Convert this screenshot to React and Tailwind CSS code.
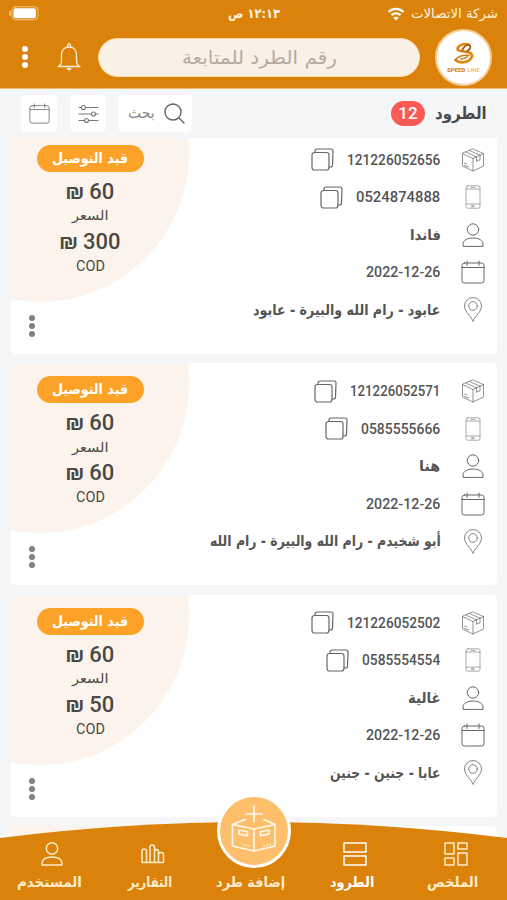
import React, { useLayoutEffect, useRef, useState } from 'react';

const PARCELS = [
    { id: '121226052656', idWidth: 93, phone: '0524874888', phoneWidth: 84, name: 'فاندا', nameWidth: 31, address: 'عابود - رام الله والبيرة - عابود', addressWidth: 187, price: '60', cod: '300' },
    { id: '121226052571', idWidth: 90, phone: '0585555666', phoneWidth: 79, name: 'هنا', nameWidth: 21, address: 'أبو شخيدم - رام الله والبيرة - رام الله', addressWidth: 231, price: '60', cod: '60' },
    { id: '121226052502', idWidth: 93, phone: '0585554554', phoneWidth: 78, name: 'غالية', nameWidth: 33, address: 'عابا - جنين - جنين', addressWidth: 111, price: '60', cod: '50' },
];

// Squeezes or stretches a label to a fixed width
const FitText = ({ width, className = '', dir = 'rtl', children }) => {
    const ref = useRef(null);
    const [scale, setScale] = useState(1);

    useLayoutEffect(() => {
        if (ref.current.offsetWidth) setScale(width / ref.current.offsetWidth);
    }, [width, children]);

    return (
        <span className="flex shrink-0 justify-start" dir="rtl" style={{ width }}>
            <span
                ref={ref}
                dir={dir}
                className={`block shrink-0 origin-right whitespace-nowrap ${className}`}
                style={{ transform: `scaleX(${scale})` }}
            >
                {children}
            </span>
        </span>
    );
};

const Svg = ({ children, className = '', ...props }) => (
    <svg fill="none" stroke="currentColor" strokeLinecap="round" strokeLinejoin="round" className={`shrink-0 ${className}`} {...props}>
        {children}
    </svg>
);

const UserIcon = ({ className, strokeWidth = 1 }) => (
    <Svg width="22" height="24" viewBox="0 0 22 24" strokeWidth={strokeWidth} className={className}>
        <circle cx="11" cy="6.5" r="5.7" />
        <path d="M1 23v-2c0-3.500 4-6 10-6s10 2.500 10 6v2z" />
    </Svg>
);

const CalendarIcon = ({ className }) => (
    <Svg width="24" height="24" viewBox="0 0 24 24" strokeWidth="1" className={className}>
        <rect x="1" y="3" width="22" height="20" rx="2.500" />
        <path d="M1 7.500h22M6 1v4.500M18 1v4.500" />
    </Svg>
);

const BoxIcon = () => (
    <Svg width="24" height="24" viewBox="0 0 24 24" strokeWidth="0.8" className="text-[#777]">
        <path d="M12 1 22.500 5.500v12.500L12 23 1.500 18V5.500zM1.500 5.500 12 10.500l10.500-5M12 10.500V23M5 4l10.500 5M8.500 2.500 19 7.200M15.500 9v4.500l1.500-1.500 2 .2V7.200" />
        <path d="m3.500 15 2.500 1M3.500 17.500l4 1.500" />
    </Svg>
);

const PhoneIcon = () => (
    <Svg width="16" height="24" viewBox="0 0 16 24" strokeWidth="0.7" className="text-[#888]">
        <rect x="1" y="0.800" width="14" height="22.400" rx="1.800" />
        <path d="M1 4h14M1 19h14M6 2.400h4" />
        <rect x="7" y="20.300" width="2" height="1.500" />
    </Svg>
);

const PinIcon = () => (
    <Svg width="20" height="25" viewBox="0 0 20 25" strokeWidth="0.9" className="text-[#777]">
        <path d="M10 24C7.500 18.500 1.500 14.500 1.500 9a8.500 8.500 0 0 1 17 0c0 5.500-6 9.500-8.500 15z" />
        <circle cx="10" cy="9" r="4.300" />
    </Svg>
);

const CopyIcon = () => (
    <Svg width="23" height="23" viewBox="0 0 23 23" strokeWidth="1.2" className="text-[#666]">
        <rect x="1" y="4.500" width="17" height="17.500" rx="2.500" />
        <path d="M4 4.500V3a2 2 0 0 1 2-2H20a2 2 0 0 1 2 2l-.5 14a2 2 0 0 1-2 2H18" />
    </Svg>
);

const Dots = ({ className }) => (
    <span className={`flex flex-col gap-[2px] ${className}`}>
        <i className="size-[6px] rounded-full bg-current" />
        <i className="size-[6px] rounded-full bg-current" />
        <i className="size-[6px] rounded-full bg-current" />
    </span>
);

const StatusBar = () => (
    <div className="grid h-[27px] grid-cols-[1fr_52px_1fr] items-center pr-[9px] pl-[9px] text-[13px] text-[#fff3df]">
        <div className="flex items-center gap-[6px]">
            <FitText width={87}>شركة الاتصالات</FitText>
            <Svg width="18" height="14" viewBox="0 0 18 14" strokeWidth="2.400" className="text-white">
                <path d="M1.500 5c4.300-4.200 10.700-4.200 15 0M4.500 8.200c2.700-2.500 6.300-2.500 9 0" strokeLinecap="butt" />
                <path d="M9 13.500 6.300 10.800q2.700-2.200 5.400 0z" fill="currentColor" stroke="none" />
            </Svg>
        </div>
        <FitText width={52} className="font-bold">١٢:١٣ ص</FitText>
        <div className="flex justify-end">
            <Svg width="30" height="15" viewBox="0 0 30 15" strokeWidth="0.8" className="text-[#f8d8a8]">
                <rect x="3" y="0.800" width="26" height="13" rx="3.500" />
                <path d="M1 5.500v3.500" strokeWidth="1.400" />
                <rect x="4.500" y="2.300" width="22.500" height="10" rx="2" fill="#fff" stroke="none" />
            </Svg>
        </div>
    </div>
);

const Logo = () => (
    <div className="flex size-[57px] shrink-0 flex-col items-center rounded-full border-2 border-[#f8cd91] bg-white pt-[11px]">
        <svg width="22" height="22" viewBox="0 0 22 22" fill="none">
            <path d="M15.500 2.500C10 1 4.500 4 4.500 7c0 3.500 10 1.500 13.500 4.500 3 3-1 7.500-6 8.500-4 .8-8-.5-9.500-2" stroke="#de8510" strokeWidth="2.600" strokeLinecap="round" />
            <path d="M9 9c1-3.500 4-6.500 7-6 2.500.5 1.500 5-2.500 6.500" stroke="#a65f15" strokeWidth="1.800" />
            <path d="M2.500 17.500C6 14 11 13 16 13.500M8 17c2.500 0 5-1 6.500-2.500" stroke="#ce7912" strokeWidth="1.500" strokeLinecap="round" />
        </svg>
        <div dir="ltr" className="mt-[2px] flex gap-[2px] font-['Roboto',sans-serif] text-[6px] leading-[8px] font-black">
            <span className="text-[#d88723]">SPEED</span>
            <span className="font-medium text-[#eeb570]">LINE</span>
        </div>
    </div>
);

const Header = () => (
    <header className="h-[89px] shrink-0 border-b border-[#eeba70] bg-[#da8209]">
        <StatusBar />
        <div className="flex h-[60px] items-center pr-[15px] pl-[22px]">
            <Logo />
            <div className="mr-[15px] flex h-[39px] w-[322px] shrink-0 items-center justify-center rounded-full border border-[#ffdca5] bg-[#faf1e6] pl-[1px] text-[19px] text-[#b5aaa0]">
                <FitText width={155}>رقم الطرد للمتابعة</FitText>
            </div>
            <Svg width="24" height="28" viewBox="0 0 24 28" strokeWidth="1.300" className="mr-[17px] text-[#fff0d8]">
                <path d="M1 23.500c3-1.500 3.500-3 3.500-7V12C4.500 7 7.500 4 12 4s7.500 3 7.500 8v4.500c0 4 .5 5.500 3.500 7z" />
                <path d="M10.500 4V2.500a1.500 1.500 0 0 1 3 0V4" />
                <path d="M9.500 25h5q-.5 2.500-2.500 2.500T9.500 25z" fill="currentColor" stroke="none" />
            </Svg>
            <Dots className="mr-auto text-white" />
        </div>
    </header>
);

const Toolbar = () => (
    <div className="flex h-[49px] shrink-0 items-center pr-[20px] pl-[21px]">
        <div className="text-[17px] font-bold text-[#4b4b4d]"><FitText width={52}>الطرود</FitText></div>
        <span className="mr-[10px] flex h-[25px] w-[34px] items-center justify-center rounded-full bg-[#fb5a55] font-['Roboto',sans-serif] text-[17px] font-medium text-white">12</span>
        <button className="mr-auto flex h-[37px] w-[74px] items-center rounded-[5px] bg-white pr-[7px] text-[15px] text-[#888]">
            <Svg width="21" height="21" viewBox="0 0 21 21" strokeWidth="1.400" className="text-[#666]">
                <circle cx="9" cy="9" r="8" />
                <path d="m15 15 5 5" />
            </Svg>
            <span className="mr-[9px]"><FitText width={27}>بحث</FitText></span>
        </button>
        <button className="mr-[12px] flex h-[37px] w-[36px] items-center justify-center rounded-[5px] bg-white">
            <Svg width="21" height="20" viewBox="0 0 21 20" strokeWidth="1.100" className="text-[#777]">
                <path d="M1 3.500h2.500M7.500 3.500H20M1 10h12.500M17.500 10H20M1 16.500h5.500M10.500 16.500H20" />
                <circle cx="5.500" cy="3.500" r="2" />
                <circle cx="15.500" cy="10" r="2" />
                <circle cx="8.500" cy="16.500" r="2" />
            </Svg>
        </button>
        <button className="mr-[13px] flex h-[37px] w-[36px] items-center justify-center rounded-[5px] bg-white text-[#777]">
            <CalendarIcon className="size-[21px]" />
        </button>
    </div>
);

const Row = ({ icon, children }) => (
    <div className="flex h-[37.5px] items-center">
        <span className="flex w-[26px] justify-center">{icon}</span>
        <span className="mr-[19px] flex items-center gap-[14px] text-[15px] font-bold text-[#555]">{children}</span>
    </div>
);

const CardShell = ({ children }) => (
    <article className="relative flex h-[222px] shrink-0 justify-between overflow-hidden rounded-[5px] bg-white">
        <div className="absolute top-[-128px] left-[-120px] size-[298px] rounded-full bg-[#fcf4ec]" />
        {children}
    </article>
);

const ParcelCard = ({ parcel }) => (
    <CardShell>
        <div className="relative pt-[9.5px] pr-[11.5px]">
            <Row icon={<BoxIcon />}>
                <FitText width={parcel.idWidth} dir="ltr" className="font-['Roboto',sans-serif] font-medium">{parcel.id}</FitText>
                <CopyIcon />
            </Row>
            <Row icon={<PhoneIcon />}>
                <FitText width={parcel.phoneWidth} dir="ltr" className="font-['Roboto',sans-serif] font-medium">{parcel.phone}</FitText>
                <CopyIcon />
            </Row>
            <Row icon={<UserIcon className="text-[#666]" />}>
                <FitText width={parcel.nameWidth}>{parcel.name}</FitText>
            </Row>
            <Row icon={<CalendarIcon className="text-[#666]" />}>
                <FitText width={74} dir="ltr" className="font-['Roboto',sans-serif] font-medium">2022-12-26</FitText>
            </Row>
            <Row icon={<PinIcon />}>
                <FitText width={parcel.addressWidth}>{parcel.address}</FitText>
            </Row>
        </div>
        <div className="relative flex w-[158px] flex-col items-center pt-[13px] text-[#4c4844]">
            <span className="flex h-[27px] w-[107px] items-center justify-center rounded-full bg-[#fda229] text-[14px] font-bold text-white">
                <FitText width={76}>قيد التوصيل</FitText>
            </span>
            <span dir="ltr" className="mt-[6px] h-[27px] font-['Roboto','DejaVu_Sans',sans-serif] text-[22px] leading-[27px] font-medium">₪ {parcel.price}</span>
            <span className="flex h-[23px] items-center text-[13px]"><FitText width={37}>السعر</FitText></span>
            <span dir="ltr" className="h-[27px] font-['Roboto','DejaVu_Sans',sans-serif] text-[22px] leading-[27px] font-medium">₪ {parcel.cod}</span>
            <span className="font-['Roboto',sans-serif] text-[14px] leading-[22px]"><FitText width={29} dir="ltr">COD</FitText></span>
            <Dots className="mt-auto mb-[17px] ml-[18px] self-end text-[#808080]" />
        </div>
    </CardShell>
);

const NavItem = ({ icon, label, width, active }) => (
    <div className={`flex w-[101px] flex-col items-center ${active ? 'text-white' : 'text-[#ffeccb]'}`}>
        <span className="flex h-[26px] items-center">{icon}</span>
        <span className="mt-[2px] mr-[5px] flex h-[26px] items-center text-[14px] font-bold"><FitText width={width}>{label}</FitText></span>
    </div>
);

const BottomNav = () => (
    <nav className="absolute inset-x-0 bottom-0 h-[78px]">
        <svg width="507" height="78" viewBox="0 0 507 78" className="absolute inset-0">
            <path d="M0 16Q254-16 507 16V78H0z" fill="#da8209" />
        </svg>
        <div className="relative flex justify-center pt-[19px]">
            <NavItem
                label="الملخص"
                width={51}
                icon={(
                    <Svg width="24" height="24" viewBox="0 0 24 24" strokeWidth="1.500">
                        <path d="M1 1h9v11H1zM14 1h9v6h-9zM14 11h9v12h-9zM1 16h9v7H1z" />
                    </Svg>
                )}
            />
            <NavItem
                active
                label="الطرود"
                width={44}
                icon={(
                    <Svg width="24" height="24" viewBox="0 0 24 24" strokeWidth="1.500">
                        <path d="M1 1h22v9H1zM1 14h22v9H1z" />
                    </Svg>
                )}
            />
            <NavItem label="إضافة طرد" width={69} />
            <NavItem
                label="التقارير"
                width={44}
                icon={(
                    <Svg width="24" height="20" viewBox="0 0 24 20" strokeWidth="1.500">
                        <path d="M1 18.500V7q0-2 2.200-2t2.300 2v11.500zM9 18.500V3q0-2 2.200-2T13.500 3v15.500zM13.500 18.500V8Q13.500 5.500 15.500 5.500T17.500 8v10.500zM17.500 18.500V10.500q0-2 2.500-2t2.500 2v8zM5.500 18.500H9" />
                    </Svg>
                )}
            />
            <NavItem label="المستخدم" width={65} icon={<UserIcon strokeWidth={1.5} />} />
        </div>
        <div className="absolute -top-[28px] left-[217px] flex size-[74px] items-center justify-center rounded-full border-[3px] border-white bg-[#fdbf6c]">
            <Svg width="46" height="48" viewBox="0 0 46 48" strokeWidth="1.600" className="mb-[6px] text-[#fffaf0]">
                <path d="M23 2v16M15 10h16" />
                <path d="M14 15.500 1.500 20.500v21.500L23 47l21-5V20.500L33 15.500M1.500 20.500 23 25l21-4.500M23 25v22" />
                <path d="m8 26 8.500 1.800v4L8 30zM38 26l-8.500 1.800v4L38 30z" />
                <path d="M12 40.500h.1M15 41.300h.1M18 42h.1M33 42h.1M36 41.300h.1M39 40.500h.1" />
            </Svg>
        </div>
    </nav>
);

export default function App() {
    return (
        <div dir="rtl" className="relative flex h-[900px] w-[507px] flex-col overflow-hidden bg-[#f4f6f8] font-['DejaVu_Sans',sans-serif]">
            <Header />
            <Toolbar />
            <main className="min-h-0 flex-1 overflow-hidden pr-[10px] pl-[11px]">
                {/* list is scrolled a few pixels under the toolbar */}
                <div className="-mt-[6.5px] flex flex-col gap-[9.5px]">
                    {PARCELS.map((p) => <ParcelCard key={p.id} parcel={p} />)}
                    <CardShell />
                </div>
            </main>
            <BottomNav />
        </div>
    );
}
